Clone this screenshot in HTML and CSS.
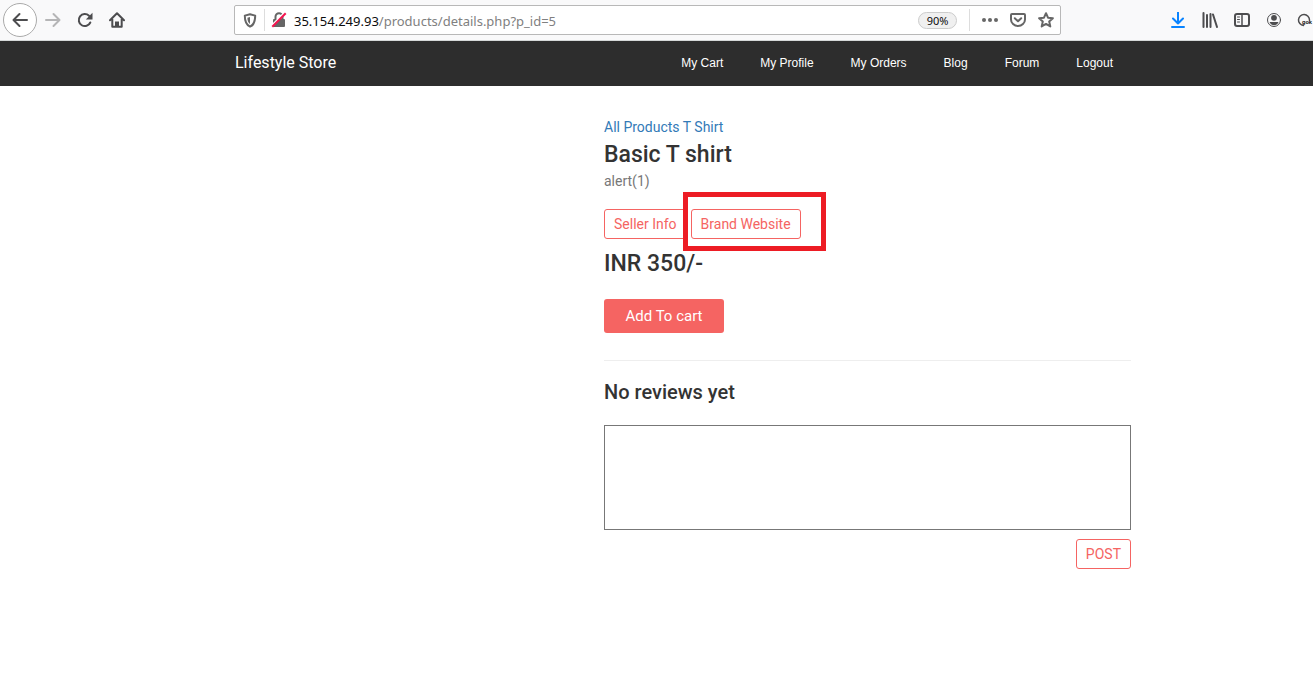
FILE: index.html
```html
<!DOCTYPE html>
<html lang="en">
<head>
<meta charset="utf-8">
<title>Lifestyle Store</title>
<link rel="stylesheet" href="styles.css">
</head>
<body>
<div class="toolbar">
  <button class="tool back" aria-label="Back"><svg width="18" height="16" viewBox="0 0 18 16"><path d="M16 8H3M8.500 2L2.500 8l6 6" class="line"/></svg></button>
  <button class="tool faded" aria-label="Forward"><svg width="18" height="16" viewBox="0 0 18 16"><path d="M2 8h13M9.500 2l6 6-6 6" class="line"/></svg></button>
  <button class="tool" aria-label="Reload"><svg width="16" height="16" viewBox="0 0 16 16"><path d="M13.300 10.500A6 6 0 1 1 12 3.800" class="line"/><path d="M15.500.8v6.700H8.800z" class="solid"/></svg></button>
  <button class="tool" aria-label="Home"><svg width="16" height="16" viewBox="0 0 16 16"><path d="M1 8.300L8 1.300l7 7M3.300 7v7.700h9.400V7" class="line"/><path d="M6 15V9.500h4V15z" class="solid"/></svg></button>
  <div class="address">
    <button class="mini" aria-label="Protection"><svg width="14" height="15" viewBox="0 0 14 15"><path d="M7 1.200L1.800 2.600C1.800 8 3 12 7 13.700c4-1.700 5.200-5.700 5.200-11.100z" class="line"/><path d="M7 4v7C5 9.500 4.500 7.500 4.400 4.700z" class="solid"/></svg></button>
    <button class="mini lock" aria-label="Connection is not secure"><svg width="16" height="16" viewBox="0 0 16 16"><path d="M4.500 8V4.800a3.500 3.500 0 0 1 7 0V8" class="line"/><rect x="2" y="7" width="12" height="8" rx="1" class="solid"/><path d="M0 14.300L13.500 .8" stroke="#fff" stroke-width="2"/><path d="M1.300 14.700L14.700 1.300" stroke="#f4144e" stroke-width="2"/></svg></button>
    <div class="url" role="textbox" contenteditable="true" spellcheck="false" aria-label="Address">35.154.249.93<span class="path">/products/details.php?p_id=5</span></div>
    <button class="zoom">90%</button>
    <div class="actions">
      <button class="action" aria-label="Page actions"><svg width="18" height="6" viewBox="0 0 18 6"><g class="solid"><circle cx="3" cy="3" r="2"/><circle cx="9" cy="3" r="2"/><circle cx="15" cy="3" r="2"/></g></svg></button>
      <button class="action" aria-label="Save to Pocket"><svg width="16" height="16" viewBox="0 0 16 16"><path d="M2 2h12q1 0 1 1v4.500a7 6.500 0 0 1-14 0V3q0-1 1-1z" class="line"/><path d="M4.800 6.200L8 9.300l3.200-3.100" class="line"/></svg></button>
      <button class="action" aria-label="Bookmark"><svg width="16" height="16" viewBox="0 0 16 16"><path d="M8 1.200l2 4.500 4.900.5-3.700 3.300 1.100 4.900L8 11.900l-4.300 2.500 1.100-4.900L1.100 6.200 6 5.700z" class="line"/></svg></button>
    </div>
  </div>
  <button class="tool download" aria-label="Downloads"><svg width="14" height="16" viewBox="0 0 14 16"><path d="M7 .5v11M2 6.500l5 5 5-5M1 15h12" class="line"/></svg></button>
  <button class="tool" aria-label="Library"><svg width="16" height="16" viewBox="0 0 16 16"><path d="M1.500 1v14M5 3v12M8.500 2v13M11 2.500l4 12.500" class="line"/></svg></button>
  <button class="tool" aria-label="Sidebars"><svg width="16" height="16" viewBox="0 0 16 16"><rect x="1" y="2" width="14" height="12" rx="2" class="line"/><path d="M8 2v12" class="line thin"/><path d="M3.500 5h2M3.500 7.500h2M3.500 10h2" class="line hair"/></svg></button>
  <button class="tool" aria-label="Account"><svg width="16" height="16" viewBox="0 0 16 16"><circle cx="8" cy="8" r="6.500" class="line hair"/><circle cx="8" cy="5.800" r="2.900" class="solid"/><path d="M3.500 10h9Q11 13.300 8 13.300T3.500 10z" class="solid"/></svg></button>
  <button class="tool extension" aria-label="Extension"><svg width="18" height="16" viewBox="0 0 18 16"><path d="M6.500 13.500A5.500 5.500 0 1 1 12.500 8" class="line thin"/><text x="5" y="12" class="badge">gok</text></svg></button>
</div>
<header class="site">
  <div class="container bar">
    <a class="brand" href="#">Lifestyle Store</a>
    <nav class="menu">
      <a href="#">My Cart</a><a href="#">My Profile</a><a href="#">My Orders</a><a href="#">Blog</a><a href="#">Forum</a><a href="#">Logout</a>
    </nav>
  </div>
</header>
<main class="container page">
  <section class="product">
    <div class="crumbs"><a href="#">All Products</a> <a href="#">T Shirt</a></div>
    <h1>Basic T shirt</h1>
    <p class="description">alert(1)</p>
    <div class="links">
      <a class="outline" href="#">Seller Info</a>
      <span class="marked"><a class="outline" href="#">Brand Website</a></span>
    </div>
    <p class="price">INR 350/-</p>
    <button class="add">Add To cart</button>
    <hr>
    <h2>No reviews yet</h2>
    <form class="review">
      <textarea aria-label="Write a review"></textarea>
      <button class="outline" type="button">POST</button>
    </form>
  </section>
</main>
</body>
</html>
```
FILE: styles.css
```css
* { box-sizing: border-box; }
body { margin: 0; background: #fff; color: #333; font: 14px/20px Roboto, sans-serif; }
a { color: #337ab7; text-decoration: none; }
button { font: inherit; color: inherit; margin: 0; padding: 0; border: 0; background: none; }
svg { display: block; flex: none; }
.line { fill: none; stroke: currentColor; stroke-width: 2; stroke-linejoin: round; stroke-linecap: round; }
.thin { stroke-width: 1.5; }
.hair { stroke-width: 1; }
.solid { fill: currentColor; }

.toolbar { display: flex; align-items: center; height: 41px; padding-left: 3px; background: #f9f9fa; border-bottom: 1px solid #d5d8d8; color: #4d4d4f; overflow: hidden; }
.tool { display: flex; flex: none; align-items: center; justify-content: center; width: 32px; height: 32px; }
.back { width: 34px; height: 34px; border: 1px solid #aaa; border-radius: 50%; background: #fff; }
.faded { color: #b5b5b6; }
.download { color: #0a84ff; }
.extension { width: 23px; justify-content: flex-start; padding-left: 7px; overflow: hidden; }
.badge { font: bold 6px Roboto, sans-serif; fill: #222; }
.address { display: flex; flex: 1; align-items: center; height: 30px; margin: 0 101px; border: 1px solid #b8b8b8; border-radius: 2px; background: #fff; color: #666; }
.mini { display: flex; align-items: center; justify-content: center; width: 29px; height: 22px; }
.lock { border-left: 1px solid #ddd; }
.url { flex: 1; padding: 1px 0 0 1px; font: 13px/20px "Noto Sans", sans-serif; color: #0c0c0d; white-space: nowrap; outline: 0; }
.path { color: #808080; }
.zoom { width: 39px; height: 17px; border: 1px solid #ccc; border-radius: 9px; background: #f0f0f0; color: #0c0c0d; font: 11px/15px "Noto Sans", sans-serif; }
.actions { display: flex; margin-left: 12px; padding-left: 6px; border-left: 1px solid #ddd; }
.action { display: flex; align-items: center; justify-content: center; width: 28px; height: 22px; }

.container { width: 100%; max-width: 1053px; margin: 0 auto; }
.site { background: #2d2d2d; }
.bar { display: flex; align-items: center; justify-content: space-between; height: 45px; padding: 0 70px 2px 105px; }
.bar a { color: #fff; }
.brand { font-size: 16px; }
.menu { display: flex; gap: 37px; font-family: "Liberation Sans", sans-serif; font-size: 12px; }

.page { display: flex; justify-content: flex-end; padding: 31px 52px 32px 0; }
.product { width: 527px; }
h1, h2, .price { margin: 0; color: #333; font-weight: 500; }
h1, .price { font-size: 23px; line-height: 32px; }
h1 { margin-top: 2px; }
h2 { font-size: 20px; line-height: 24px; }
.description { margin: 0 0 18px; color: #777; }
.links { display: flex; gap: 4px; }
.outline { display: block; padding: 4px 9px; border: 1px solid #f56462; border-radius: 3px; color: #f56462; background: #fff; line-height: 20px; }
.marked { position: relative; }
.marked::after { content: ""; position: absolute; inset: -17px -25px -12px -8px; border: 5px solid #ed1c24; pointer-events: none; }
.price { margin: 9px 0 19px; }
.add { display: block; width: 120px; height: 34px; border-radius: 3px; background: #f56462; color: #fff; font-size: 15px; }
hr { margin: 27px 0 19px; border: 0; border-top: 1px solid #eee; }
.review { display: flex; flex-direction: column; align-items: flex-end; gap: 9px; margin-top: 21px; }
textarea { display: block; width: 100%; height: 105px; border: 1px solid #777; background: #fff; resize: none; font: inherit; }
```
